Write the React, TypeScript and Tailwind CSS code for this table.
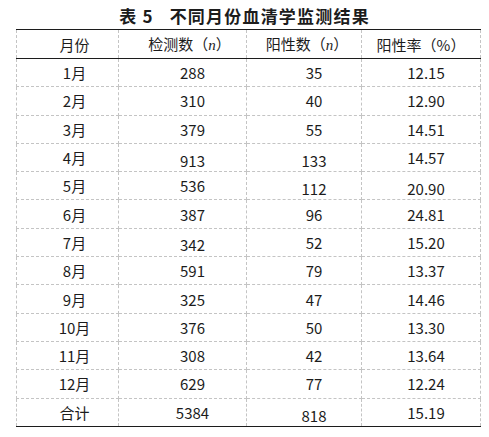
import React from "react";

type Row = { m: string; a: string; b: string; c: string; da?: string; db?: string; dc?: string; dm?: string };

const rows: Row[] = [
  { m: "1月", a: "288", b: "35", c: "12.15" },
  { m: "2月", a: "310", b: "40", c: "12.90" },
  { m: "3月", a: "379", b: "55", c: "14.51" },
  { m: "4月", a: "913", b: "133", c: "14.57", da: "pt-[6px]", db: "pt-[6px]" },
  { m: "5月", a: "536", b: "112", c: "20.90", db: "pt-[6px]", dc: "pt-[6px]" },
  { m: "6月", a: "387", b: "96", c: "24.81" },
  { m: "7月", a: "342", b: "52", c: "15.20", da: "pt-[4px]" },
  { m: "8月", a: "591", b: "79", c: "13.37" },
  { m: "9月", a: "325", b: "47", c: "14.46" },
  { m: "10月", a: "376", b: "50", c: "13.30" },
  { m: "11月", a: "308", b: "42", c: "13.64" },
  { m: "12月", a: "629", b: "77", c: "12.24" },
  { m: "合计", a: "5384", b: "818", c: "15.19", db: "pt-[6px]" },
];

const cell = "border border-dashed border-[#c4c4c4] p-0 text-center align-middle";

export default function App() {
  return (
    <div
      className="w-[489px] h-[437px] bg-white text-[#1c1c1c]"
      style={{ fontFamily: '"Noto Sans CJK SC", "Noto Sans", sans-serif' }}
    >
      <div className="h-[29px] flex items-center justify-center pt-[1px] text-[17px] font-semibold tracking-[1.2px] leading-none">
        <span>表 5</span>
        <span className="ml-[16px]">不同月份血清学监测结果</span>
      </div>
      <div className="px-[16px]">
        <table className="w-[464px] border-collapse table-fixed text-[15px] leading-none">
          <colgroup>
            <col className="w-[102px]" />
            <col className="w-[128px]" />
            <col className="w-[115px]" />
            <col className="w-[119px]" />
          </colgroup>
          <thead>
            <tr className="h-[29px] border-t-[1.5px] border-t-[#1c1c1c] border-b-[1.5px] border-b-[#1c1c1c]">
              <th className={`${cell} font-normal pl-[14px]`}>月份</th>
              <th className={`${cell} font-normal pl-[14px]`}>
                检测数（<span className="italic" style={{ fontFamily: '"Liberation Serif", serif' }}>n</span>）
              </th>
              <th className={`${cell} font-normal pl-[6px]`}>
                阳性数（<span className="italic" style={{ fontFamily: '"Liberation Serif", serif' }}>n</span>）
              </th>
              <th className={`${cell} font-normal`}>阳性率（%）</th>
            </tr>
          </thead>
          <tbody>
            {rows.map((r, i) => (
              <tr
                key={r.m}
                className={
                  i === rows.length - 1
                    ? "h-[28.5px] border-b-[1.5px] border-b-[#1c1c1c]"
                    : "h-[28.3px]"
                }
              >
                <td className={`${cell} pl-[14px] ${r.dm ?? ""}`}>{r.m}</td>
                <td className={`${cell} pl-[20px] ${r.da ?? ""}`}>{r.a}</td>
                <td className={`${cell} pl-[20px] ${r.db ?? ""}`}>{r.b}</td>
                <td className={`${cell} pl-[10px] ${r.dc ?? ""}`}>{r.c}</td>
              </tr>
            ))}
          </tbody>
        </table>
      </div>
    </div>
  );
}
